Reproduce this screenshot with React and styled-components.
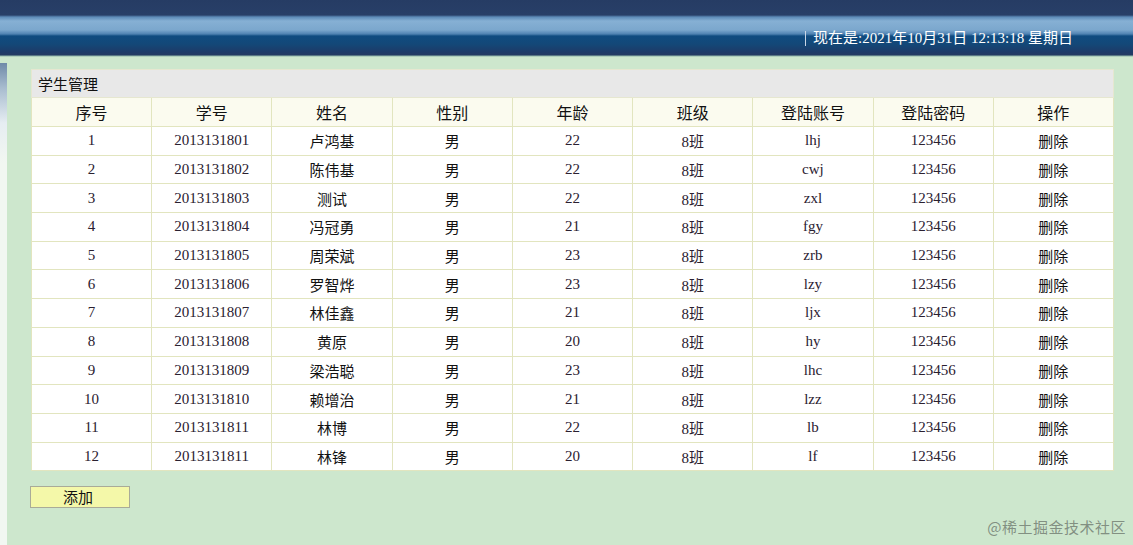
import React from 'react';
import styled, { createGlobalStyle } from 'styled-components';

const students = [
  ['1', '2013131801', '卢鸿基', '男', '22', 'lhj'],
  ['2', '2013131802', '陈伟基', '男', '22', 'cwj'],
  ['3', '2013131803', '测试', '男', '22', 'zxl'],
  ['4', '2013131804', '冯冠勇', '男', '21', 'fgy'],
  ['5', '2013131805', '周荣斌', '男', '23', 'zrb'],
  ['6', '2013131806', '罗智烨', '男', '23', 'lzy'],
  ['7', '2013131807', '林佳鑫', '男', '21', 'ljx'],
  ['8', '2013131808', '黄原', '男', '20', 'hy'],
  ['9', '2013131809', '梁浩聪', '男', '23', 'lhc'],
  ['10', '2013131810', '赖增治', '男', '21', 'lzz'],
  ['11', '2013131811', '林博', '男', '22', 'lb'],
  ['12', '2013131811', '林锋', '男', '20', 'lf'],
];

const heads = ['序号', '学号', '姓名', '性别', '年龄', '班级', '登陆账号', '登陆密码', '操作'];

const Global = createGlobalStyle`
  html, body {
    margin: 0;
    padding: 0;
    height: 100%;
    background: #cde7cd;
    font-family: "Liberation Serif", "Noto Sans CJK SC", serif;
    overflow: hidden;
  }
  #root { height: 100%; }
`;

const Page = styled.div`
  height: 545px;
  display: flex;
  flex-direction: column;
  position: relative;
`;

const Header = styled.div`
  height: 57px;
  flex: none;
  background: linear-gradient(
    to bottom,
    #263c64 0px,
    #283f68 15px,
    #5d8bb8 17px,
    #86b0d4 21px,
    #7ba7cd 30px,
    #4f82b2 34px,
    #0f4b80 36px,
    #134878 44px,
    #1d3b68 52px,
    #243a62 55px,
    #8fb5a8 56px,
    #cde7cd 57px
  );
  display: flex;
  justify-content: flex-end;
  align-items: flex-start;
  padding-right: 60px;
`;

const Clock = styled.div`
  margin-top: 29px;
  display: flex;
  align-items: center;
  gap: 7px;
  color: #ffffff;
  font-size: 15px;
  line-height: 18px;
  font-family: "Liberation Serif", "Noto Sans CJK SC", serif;
`;

const Divider = styled.span`
  width: 1px;
  height: 15px;
  background: #c9d6e6;
`;

const Body = styled.div`
  flex: 1;
  display: flex;
`;

const LeftStrip = styled.div`
  width: 7px;
  flex: none;
  margin-top: 6px;
  background: linear-gradient(to bottom, #6f8aa8 0px, #a8bccf 25px, #e6edf2 60px, #f2f7f2 100px, #f2f7f2 100%);
`;

const Main = styled.div`
  flex: 1;
  padding: 12px 19px 0 24px;
`;

const Table = styled.table`
  width: 1083px;
  border-collapse: collapse;
  table-layout: fixed;
  font-size: 15px;
  border: 1px solid #e2e5bf;
`;

const TitleCell = styled.td`
  height: 27px;
  background: #e8e8e8;
  color: #111;
  padding: 0 0 0 6px;
  text-align: left;
  font-family: "Noto Sans CJK SC", sans-serif;
  font-size: 15px;
  border: 1px solid #e6e7d0;
`;

const Th = styled.th`
  height: 28px;
  padding: 0;
  background: #fbfbef;
  color: #111;
  font-weight: normal;
  font-family: "Noto Sans CJK SC", sans-serif;
  font-size: 16px;
  border: 1px solid #e2e5bf;
`;

const Td = styled.td`
  height: 27.7px;
  padding: 0;
  background: #ffffff;
  text-align: center;
  color: ${p => (p.$cjk ? '#111' : '#2a2030')};
  font-family: ${p => (p.$cjk ? '"Noto Sans CJK SC", sans-serif' : '"Liberation Serif", "Noto Sans CJK SC", serif')};
  font-size: 15px;
  border: 1px solid #e2e5bf;
`;

const AddButton = styled.button`
  margin-top: 15px;
  margin-left: -1px;
  width: 100px;
  height: 22px;
  padding: 0 4px 0 0;
  background: #f4f8a9;
  border: 1px solid #a9ab98;
  color: #111;
  font-family: "Noto Sans CJK SC", sans-serif;
  font-size: 15px;
  line-height: 18px;
`;

const Watermark = styled.div`
  position: absolute;
  right: 7px;
  bottom: 8px;
  color: rgba(110, 120, 110, 0.8);
  font-family: "Noto Sans CJK SC", sans-serif;
  font-size: 15px;
  letter-spacing: 0.5px;
`;

export default function App() {
  return (
    <Page>
      <Global />
      <Header>
        <Clock>
          <Divider />
          <span>现在是:2021年10月31日 12:13:18 星期日</span>
        </Clock>
      </Header>
      <Body>
        <LeftStrip />
        <Main>
          <Table>
            <tbody>
              <tr>
                <TitleCell colSpan={9}>学生管理</TitleCell>
              </tr>
              <tr>
                {heads.map(h => (
                  <Th key={h}>{h}</Th>
                ))}
              </tr>
              {students.map(s => (
                <tr key={s[0]}>
                  <Td>{s[0]}</Td>
                  <Td>{s[1]}</Td>
                  <Td $cjk>{s[2]}</Td>
                  <Td $cjk>{s[3]}</Td>
                  <Td>{s[4]}</Td>
                  <Td>8班</Td>
                  <Td>{s[5]}</Td>
                  <Td>123456</Td>
                  <Td $cjk>删除</Td>
                </tr>
              ))}
            </tbody>
          </Table>
          <AddButton>添加</AddButton>
        </Main>
      </Body>
      <Watermark>@稀土掘金技术社区</Watermark>
    </Page>
  );
}
